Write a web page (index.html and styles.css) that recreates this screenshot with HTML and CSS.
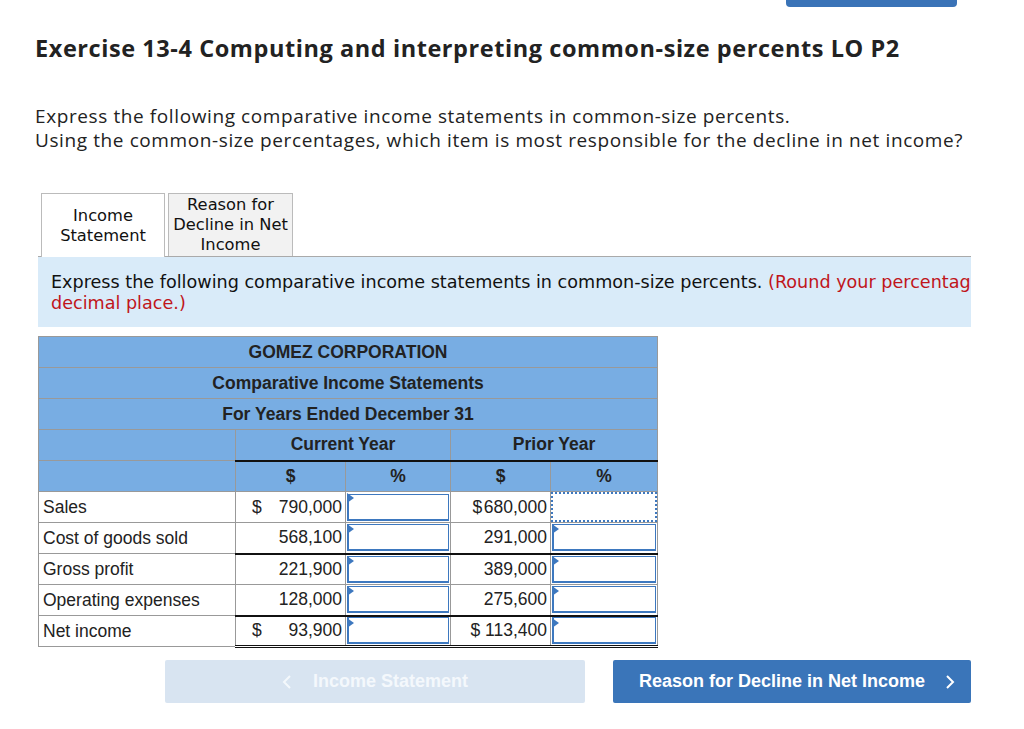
FILE: index.html
```html
<!DOCTYPE html>
<html>
<head>
<meta charset="utf-8">
<link rel="stylesheet" href="styles.css">
</head>
<body>
<div class="topbar-row"><div class="topbar"></div></div>
<div class="page">
  <h1 class="title">Exercise 13-4 Computing and interpreting common-size percents LO P2</h1>
  <p class="intro">Express the following comparative income statements in common-size percents.<br>Using the common-size percentages, which item is most responsible for the decline in net income?</p>

  <div class="work">
    <div class="tabs">
      <div class="tab tab-active">Income<br>Statement</div>
      <div class="tab">Reason for<br>Decline in Net<br>Income</div>
    </div>
    <div class="panel"><div class="panel-text">Express the following comparative income statements in common-size percents. <span class="red">(Round your percentage answers to 1</span><br><span class="red">decimal place.)</span></div></div>

    <table class="stmt">
      <colgroup>
        <col class="c1"><col class="c2"><col class="c3"><col class="c4"><col class="c5">
      </colgroup>
      <tr class="hd"><th colspan="5">GOMEZ CORPORATION</th></tr>
      <tr class="hd"><th colspan="5">Comparative Income Statements</th></tr>
      <tr class="hd"><th colspan="5">For Years Ended December 31</th></tr>
      <tr class="hd"><th></th><th colspan="2" class="uline">Current Year</th><th colspan="2" class="uline">Prior Year</th></tr>
      <tr class="hd"><th></th><th>$</th><th>%</th><th>$</th><th>%</th></tr>
      <tr>
        <td class="lbl">Sales</td>
        <td class="num"><span class="cur">$</span><span class="amt">790,000</span></td>
        <td class="inp"><div class="box"></div></td>
        <td class="num rt">$&#8202;680,000</td>
        <td class="inp focus"><div class="box dotted"></div></td>
      </tr>
      <tr>
        <td class="lbl">Cost of goods sold</td>
        <td class="num"><span class="amt">568,100</span></td>
        <td class="inp"><div class="box"></div></td>
        <td class="num rt">291,000</td>
        <td class="inp"><div class="box"></div></td>
      </tr>
      <tr class="total">
        <td class="lbl">Gross profit</td>
        <td class="num"><span class="amt">221,900</span></td>
        <td class="inp"><div class="box"></div></td>
        <td class="num rt">389,000</td>
        <td class="inp"><div class="box"></div></td>
      </tr>
      <tr>
        <td class="lbl">Operating expenses</td>
        <td class="num"><span class="amt">128,000</span></td>
        <td class="inp"><div class="box"></div></td>
        <td class="num rt">275,600</td>
        <td class="inp"><div class="box"></div></td>
      </tr>
      <tr class="total final">
        <td class="lbl">Net income</td>
        <td class="num"><span class="cur">$</span><span class="amt">93,900</span></td>
        <td class="inp"><div class="box"></div></td>
        <td class="num rt">$ 113,400</td>
        <td class="inp"><div class="box"></div></td>
      </tr>
    </table>

    <div class="nav">
      <div class="btn btn-prev">
        <svg class="chev" width="10" height="16" viewBox="0 0 10 16"><polyline points="8,2 2,8 8,14" fill="none" stroke="currentColor" stroke-width="2"/></svg>
        <span>Income Statement</span>
      </div>
      <div class="btn btn-next">
        <span>Reason for Decline in Net Income</span>
        <svg class="chev" width="10" height="16" viewBox="0 0 10 16"><polyline points="2,2 8,8 2,14" fill="none" stroke="currentColor" stroke-width="2"/></svg>
      </div>
    </div>
  </div>
</div>
</body>
</html>
```

FILE: styles.css
```css
html, body {
  margin: 0;
  padding: 0;
  background: #fff;
  overflow: hidden;
}
body {
  width: 1024px;
  height: 729px;
  font-family: "Open Sans", "Liberation Sans", sans-serif;
  color: #222;
}
.topbar-row {
  height: 7px;
  display: flex;
  padding-left: 786px;
}
.topbar {
  width: 171px;
  height: 7px;
  background: #3a73b7;
  border-radius: 0 0 4px 4px;
}
.page {
  padding-left: 35px;
  width: 989px;
  box-sizing: border-box;
}
.title {
  margin: 26px 0 0 0;
  font-size: 23.5px;
  line-height: 30px;
  font-weight: 700;
  color: #222;
  letter-spacing: 0.57px;
}
.intro {
  margin: 41px 0 0 0;
  font-size: 19px;
  line-height: 24px;
  letter-spacing: 0.6px;
  color: #222;
}
.work {
  margin-left: 3px;
  width: 933px;
  margin-top: 41px;
}
.tabs {
  display: flex;
  gap: 3px;
  padding-left: 3px;
  border-bottom: 1px solid #aaa;
  height: 63px;
  align-items: flex-end;
}
.tab {
  box-sizing: border-box;
  width: 125px;
  height: 63px;
  border: 1px solid #bbb;
  border-bottom: none;
  background: #f2f2f2;
  font-family: "DejaVu Sans", "Open Sans", sans-serif;
  font-size: 16.3px;
  line-height: 20px;
  color: #111;
  text-align: center;
  display: flex;
  align-items: center;
  justify-content: center;
}
.tab-active {
  background: #fff;
  height: 64px;
  margin-bottom: -1px;
  width: 124px;
}
.panel {
  background: #d9ebf9;
  height: 70px;
  box-sizing: border-box;
  padding: 15px 0 0 13px;
  overflow: hidden;
}
.panel-text {
  font-family: "DejaVu Sans", "Open Sans", sans-serif;
  font-size: 17.6px;
  line-height: 21px;
  color: #111;
  white-space: nowrap;
}
.panel .red {
  color: #c0151b;
}
.stmt {
  margin-top: 9px;
  border-collapse: collapse;
  table-layout: fixed;
  width: 619px;
  font-family: "Liberation Sans", Arial, sans-serif;
  font-size: 17.5px;
  color: #222;
}
.c1 { width: 197px; }
.c2 { width: 110px; }
.c3 { width: 105px; }
.c4 { width: 100px; }
.c5 { width: 107px; }
.stmt th, .stmt td {
  border: 1px solid #999;
  height: 30px;
  padding: 0;
  box-sizing: border-box;
}
.stmt tr {
  height: 31px;
}
.stmt tr.hd th {
  background: #78ade3;
  font-weight: 700;
  text-align: center;
  color: #222;
}
.stmt th.uline {
  border-bottom: 2px solid #111;
}
.stmt td.lbl {
  padding-left: 4px;
  text-align: left;
  color: #222;
}
.stmt td.num {
  padding-right: 3px;
  padding-left: 16px;
  text-align: right;
}
.stmt td.num span.cur {
  float: left;
}
.stmt td.rt {
  padding-left: 0;
}
.stmt td.inp {
  position: relative;
  padding: 0 1px;
}
.box {
  height: 27px;
  border: 2px solid #3d78bf;
  border-top-width: 1px;
  border-right-width: 1px;
  background: #fff;
  box-sizing: border-box;
}
.box.dotted {
  border: 2px dotted #3d78bf;
  height: 30px;
}
.stmt td.inp::before {
  content: "";
  position: absolute;
  left: 1px;
  top: 1px;
  width: 0;
  height: 0;
  border-top: 5px solid transparent;
  border-bottom: 5px solid transparent;
  border-left: 7px solid #3d78bf;
}
.stmt td.inp.focus::before {
  display: none;
}
.stmt td.inp.focus {
  padding: 0;
}
.stmt tr.total td.num, .stmt tr.total td.inp {
  border-top: 2px solid #111;
}
.stmt tr.final td.num, .stmt tr.final td.inp {
  border-bottom: 3px double #111;
}
.nav {
  display: flex;
  justify-content: flex-end;
  gap: 28px;
  margin-top: 12px;
}
.btn {
  height: 43px;
  box-sizing: border-box;
  border-radius: 2px;
  display: flex;
  align-items: center;
  justify-content: center;
  font-family: "Liberation Sans", Arial, sans-serif;
  font-weight: 700;
  font-size: 18px;
  color: #fff;
}
.btn-prev {
  width: 420px;
  background: #d8e4f1;
  color: #f4f8fc;
  gap: 21px;
}
.btn-next {
  width: 358px;
  background: #3a75b9;
  gap: 20px;
  padding-left: 10px;
}
.chev {
  display: block;
}
```
